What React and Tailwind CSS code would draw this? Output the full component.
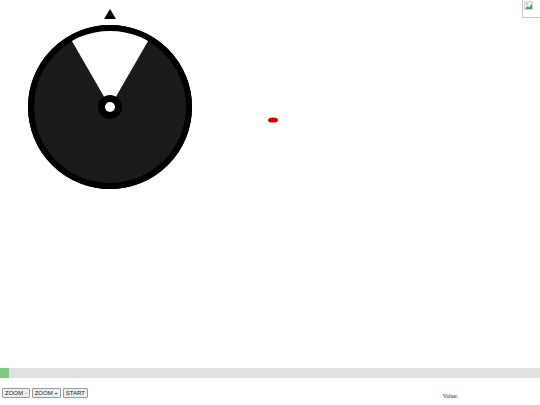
import React from "react";

export default function App() {
  const cx = 110, cy = 107, r = 79;
  const a = (30 * Math.PI) / 180;
  const ri = 77;
  const x1 = cx - ri * Math.sin(a), y1 = cy - ri * Math.cos(a);
  const x2 = cx + ri * Math.sin(a), y2 = cy - ri * Math.cos(a);
  const btn = "h-[10px] px-[2px] text-[6px] leading-[8px] font-normal bg-[#efefef] border border-[#9a9a9a] rounded-[1px] text-[#222]";
  return (
    <div className="w-[540px] h-[405px] bg-white overflow-hidden relative" style={{ fontFamily: '"Liberation Sans", Arial, sans-serif' }}>
      <div className="h-[368px] relative">
        <svg width="540" height="368" viewBox="0 0 540 368" className="block">
          <polygon points="110,9 104,19 116,19" fill="#000" />
          <circle cx={cx} cy={cy} r={r} fill="#1b1b1b" stroke="#000" strokeWidth="6" />
          <path d={`M ${cx} ${cy} L ${x1} ${y1} A ${ri} ${ri} 0 0 1 ${x2} ${y2} Z`} fill="#fff" />
          <circle cx={cx} cy={cy} r={r} fill="none" stroke="#000" strokeWidth="6" />
          <circle cx={cx} cy={cy} r="12" fill="#000" />
          <circle cx={cx} cy={cy} r="5" fill="#fff" />
          <ellipse cx="273" cy="120" rx="5" ry="2.6" fill="#d40000" />
        </svg>
        <div className="absolute top-0 right-0 w-[18px] h-[18px] border-l border-b border-[#c8c8c8]">
          <svg width="9" height="9" viewBox="0 0 9 9" className="ml-[1px] mt-[1px]">
            <rect x="0.5" y="0.5" width="8" height="8" fill="#eef3f8" stroke="#b8c4d0" strokeWidth="0.6" />
            <path d="M1 8 L3.5 5 L5 6.5 L8 3 L8 8 Z" fill="#5a9a3a" />
            <circle cx="3" cy="2.8" r="1" fill="#9ab8d8" />
          </svg>
        </div>
      </div>
      <div className="h-[10px] bg-[#e0e0e0] flex">
        <div className="w-[9px] h-full bg-[#80c880]" />
      </div>
      <div className="flex items-start pt-[10px] pl-[2px]">
        <div className="flex gap-[2px]">
          <button className={btn}>ZOOM -</button>
          <button className={btn}>ZOOM +</button>
          <button className={btn}>START</button>
        </div>
        <div className="ml-auto mr-[82px] mt-[4px] text-[6px] leading-[8px] text-[#222]" style={{ fontFamily: '"Liberation Serif", "Times New Roman", serif' }}>Value:</div>
      </div>
    </div>
  );
}
